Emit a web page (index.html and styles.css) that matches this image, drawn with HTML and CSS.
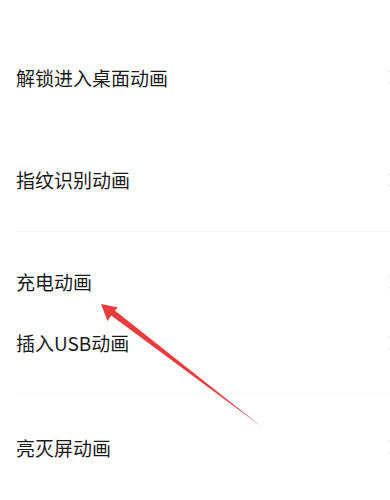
FILE: index.html
```html
<!DOCTYPE html>
<html lang="zh-CN">
<head>
<meta charset="utf-8">
<title>动画设置</title>
<link rel="stylesheet" href="styles.css">
</head>
<body>
<div class="page">
  <section class="group group-a">
    <div class="row tall"><span class="label">解锁进入桌面动画</span><svg class="chev" viewBox="0 0 8 14"><path d="M1 1 L7 7 L1 13"/></svg></div>
    <div class="row tall"><span class="label">指纹识别动画</span><svg class="chev" viewBox="0 0 8 14"><path d="M1 1 L7 7 L1 13"/></svg></div>
  </section>
  <section class="group group-b">
    <div class="row short"><span class="label">充电动画</span><svg class="chev" viewBox="0 0 8 14"><path d="M1 1 L7 7 L1 13"/></svg></div>
    <div class="row short"><span class="label">插入USB动画</span><svg class="chev" viewBox="0 0 8 14"><path d="M1 1 L7 7 L1 13"/></svg></div>
  </section>
  <section class="group group-c">
    <div class="row last"><span class="label">亮灭屏动画</span><svg class="chev" viewBox="0 0 8 14"><path d="M1 1 L7 7 L1 13"/></svg></div>
  </section>
  <svg class="arrow" viewBox="0 0 390 500" width="390" height="500">
    <polygon points="101,304 118,307.5 114.8,310.6 262,427 111.2,315.4 107.5,321"/>
  </svg>
</div>
</body>
</html>
```
FILE: styles.css
```css
html, body {
  margin: 0;
  padding: 0;
  background: #ffffff;
}
body {
  width: 390px;
  height: 500px;
  overflow: hidden;
  font-family: "Noto Sans CJK SC", "Noto Sans", sans-serif;
}
.page {
  position: relative;
  width: 390px;
  height: 500px;
  overflow: hidden;
}
.group {
  display: flex;
  flex-direction: column;
  box-sizing: border-box;
}
.group-a {
  padding-top: 26px;
  height: 232px;
  border-bottom: 1px solid #f7f7f7;
  margin-left: 16px;
}
.group-b {
  padding: 19px 0 20px;
  height: 162px;
  border-bottom: 1px solid #f7f7f7;
  margin-left: 16px;
}
.group-c {
  height: 106px;
  margin-left: 16px;
}
.row {
  display: flex;
  align-items: center;
  justify-content: space-between;
  margin-right: -6px;
}
.tall { height: 103px; }
.short { height: 61px; }
.last { height: 106px; }
.label {
  font-size: 19px;
  line-height: 1;
  color: #1a1a1a;
  letter-spacing: 0;
}
.chev {
  width: 8px;
  height: 14px;
  flex: none;
}
.chev path {
  fill: none;
  stroke: #e4e4e4;
  stroke-width: 1.2;
  stroke-linecap: round;
  stroke-linejoin: round;
}
.arrow {
  position: absolute;
  left: 0;
  top: 0;
  pointer-events: none;
}
.arrow polygon {
  fill: #ea3b3d;
}
```
